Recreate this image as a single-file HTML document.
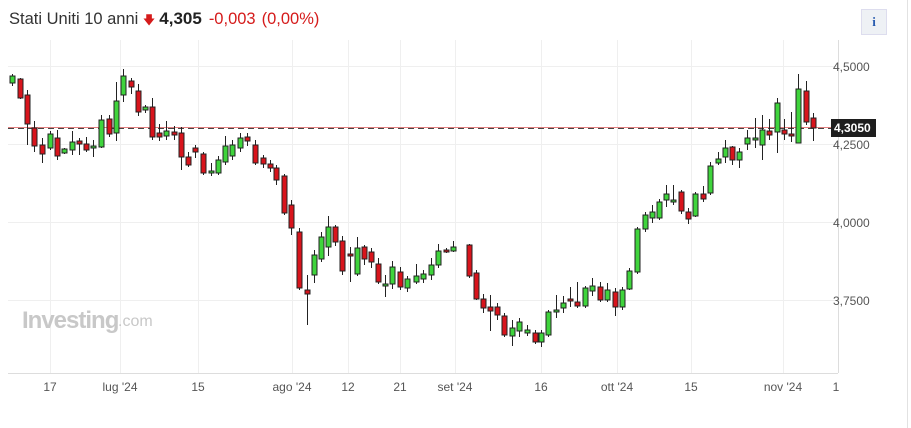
<!DOCTYPE html>
<html><head><meta charset="utf-8"><style>
body{margin:0;width:911px;height:428px;background:#fff;font-family:"Liberation Sans",sans-serif;overflow:hidden;position:relative}
.t{position:absolute;left:9px;top:9px;font-size:16.5px;color:#333;white-space:nowrap}
.t b{color:#222;font-size:17px;margin-left:4px}
.t .r{color:#d51b1b;margin-left:7px}
.i{position:absolute;left:861px;top:9px;width:24px;height:24px;background:#eef1f5;border:1px solid #dde;color:#2a5db0;font:bold 13px "Liberation Serif",serif;text-align:center;line-height:24px}
svg{position:absolute;left:0;top:0}
</style></head><body>
<div class="t">Stati Uniti 10 anni <span style="color:#d51b1b;font-size:12px">&#129095;</span><b>4,305</b><span class="r">-0,003</span><span class="r" style="margin-left:6px">(0,00%)</span></div>
<div class="i">i</div>
<svg id="s" width="911" height="428" xmlns="http://www.w3.org/2000/svg">
<g stroke="#efefef" stroke-width="1">
<line x1="8" y1="66.5" x2="838" y2="66.5"/><line x1="8" y1="144.5" x2="838" y2="144.5"/><line x1="8" y1="222.5" x2="838" y2="222.5"/><line x1="8" y1="300.5" x2="838" y2="300.5"/>
<line x1="50.5" y1="40" x2="50.5" y2="373"/><line x1="120.5" y1="40" x2="120.5" y2="373"/><line x1="198.5" y1="40" x2="198.5" y2="373"/><line x1="292.5" y1="40" x2="292.5" y2="373"/><line x1="348.5" y1="40" x2="348.5" y2="373"/><line x1="400.5" y1="40" x2="400.5" y2="373"/><line x1="455.5" y1="40" x2="455.5" y2="373"/><line x1="541.5" y1="40" x2="541.5" y2="373"/><line x1="617.5" y1="40" x2="617.5" y2="373"/><line x1="691.5" y1="40" x2="691.5" y2="373"/><line x1="783.5" y1="40" x2="783.5" y2="373"/>
</g>
<line x1="8" y1="373.5" x2="838" y2="373.5" stroke="#ddd"/>
<line x1="838.5" y1="40" x2="838.5" y2="373" stroke="#ddd"/>
<line x1="907.5" y1="0" x2="907.5" y2="428" stroke="#e2e2e2"/>
<line x1="8" y1="127.5" x2="833" y2="127.5" stroke="#e08080" stroke-width="1"/>
<line x1="8" y1="128.5" x2="833" y2="128.5" stroke="#444" stroke-dasharray="6,4"/>
<text x="22" y="328" font-family="Liberation Sans" font-weight="bold" font-size="24" fill="#c8c8c8" letter-spacing="-1">Investing</text>
<text x="118" y="326" font-family="Liberation Sans" font-size="16" fill="#c8c8c8">.com</text>
<g font-family="Liberation Sans" font-size="12" fill="#555">
<text x="833" y="71">4,5000</text><text x="833" y="149">4,2500</text><text x="833" y="227">4,0000</text><text x="833" y="305">3,7500</text>
</g>
<rect x="831" y="119" width="45" height="18" fill="#1e1e1e"/>
<text x="834" y="132" font-family="Liberation Sans" font-size="12" font-weight="bold" fill="#fff">4,3050</text>
<g font-family="Liberation Sans" font-size="12" fill="#555" text-anchor="middle">
<text x="50" y="391">17</text><text x="120" y="391">lug '24</text><text x="198" y="391">15</text><text x="292" y="391">ago '24</text><text x="348" y="391">12</text><text x="400" y="391">21</text><text x="455" y="391">set '24</text><text x="541" y="391">16</text><text x="617" y="391">ott '24</text><text x="691" y="391">15</text><text x="783" y="391">nov '24</text><text x="836" y="391">1</text>
</g>
<g id="c"></g>
</svg>
<script>
var d=[[12,76,83,74,86,1],[20,79,98,78,99,0],[27,95,124,90,145,0],[34,128,146,121,152,0],[42,145,154,138,163,0],[50,134,148,131,150,1],[57,138,156,130,160,0],[64,149,153,148,154,1],[72,142,150,131,155,1],[79,141,144,138,155,0],[86,144,150,137,152,0],[93,146,148,140,157,1],[101,120,147,115,148,1],[109,119,134,115,137,0],[116,101,133,82,141,1],[123,76,95,69,102,1],[131,81,87,78,94,0],[138,91,112,84,116,0],[145,107,110,105,113,1],[152,107,137,98,140,0],[159,133,137,124,141,0],[166,131,136,121,140,1],[174,132,135,126,140,0],[181,133,157,127,170,0],[188,157,165,152,167,0],[195,148,152,145,158,0],[203,154,173,152,175,0],[211,171,173,163,176,1],[218,160,173,156,175,1],[225,146,162,136,165,1],[232,145,156,140,160,1],[240,138,148,133,152,1],[247,137,141,133,146,0],[255,145,163,140,165,0],[263,158,164,155,168,0],[270,164,168,160,172,0],[276,168,180,165,185,0],[284,176,213,174,215,0],[291,205,228,200,235,0],[299,232,288,228,290,0],[307,290,294,275,325,0],[314,255,275,250,283,1],[321,237,259,232,262,1],[328,227,247,216,256,1],[335,227,242,225,246,0],[342,241,271,236,275,0],[350,254,256,247,282,0],[357,248,274,237,276,1],[364,247,259,245,265,0],[371,252,262,248,268,0],[378,264,282,258,284,0],[385,284,286,275,297,1],[392,267,284,261,289,1],[400,272,287,267,290,0],[407,279,288,276,292,1],[416,276,282,264,284,1],[423,274,279,270,283,1],[431,265,275,258,280,1],[438,251,265,244,268,1],[446,250,252,248,253,0],[453,247,251,241,252,1],[469,245,276,244,278,0],[476,273,299,270,300,0],[483,299,308,294,313,0],[490,307,311,295,331,0],[497,307,315,303,320,0],[504,316,335,313,337,0],[512,328,336,320,346,1],[519,322,331,318,337,1],[527,330,333,325,336,1],[535,333,342,330,344,0],[541,333,342,330,347,1],[548,312,335,310,337,1],[556,310,312,295,318,1],[563,303,308,296,313,1],[570,299,301,287,307,0],[577,302,306,282,308,0],[585,288,306,286,308,1],[592,286,291,278,296,1],[600,287,300,282,302,0],[607,290,300,283,302,1],[615,292,307,288,316,0],[622,290,307,287,310,1],[629,271,289,268,290,1],[637,229,272,227,274,1],[645,215,229,212,232,1],[652,212,218,205,223,1],[659,202,218,199,220,1],[666,194,200,185,207,1],[673,200,202,185,205,1],[681,192,211,190,214,0],[688,212,219,208,224,0],[695,194,216,192,217,1],[703,194,199,186,202,0],[710,166,193,162,195,1],[718,159,163,152,165,1],[725,148,157,140,163,1],[732,147,160,146,165,0],[739,152,160,148,168,1],[747,138,144,130,150,1],[755,138,140,118,148,1],[762,130,145,115,160,1],[769,131,135,119,140,0],[777,103,132,98,153,1],[784,130,134,119,140,0],[791,134,136,112,142,0],[798,89,143,74,143,1],[806,91,122,81,125,0],[813,118,128,113,141,0]];
var h='';d.forEach(function(a){var x=a[0];h+='<line x1="'+(x+.5)+'" y1="'+a[3]+'" x2="'+(x+.5)+'" y2="'+a[4]+'" stroke="#222"/>';h+='<rect x="'+(x-2)+'" y="'+a[1]+'" width="5" height="'+Math.max(2,a[2]-a[1])+'" fill="'+(a[5]?'#3fd43c':'#d8141c')+'" stroke="#222" stroke-width="1"/>';});
document.getElementById('c').innerHTML=h;
</script>
</body></html>
